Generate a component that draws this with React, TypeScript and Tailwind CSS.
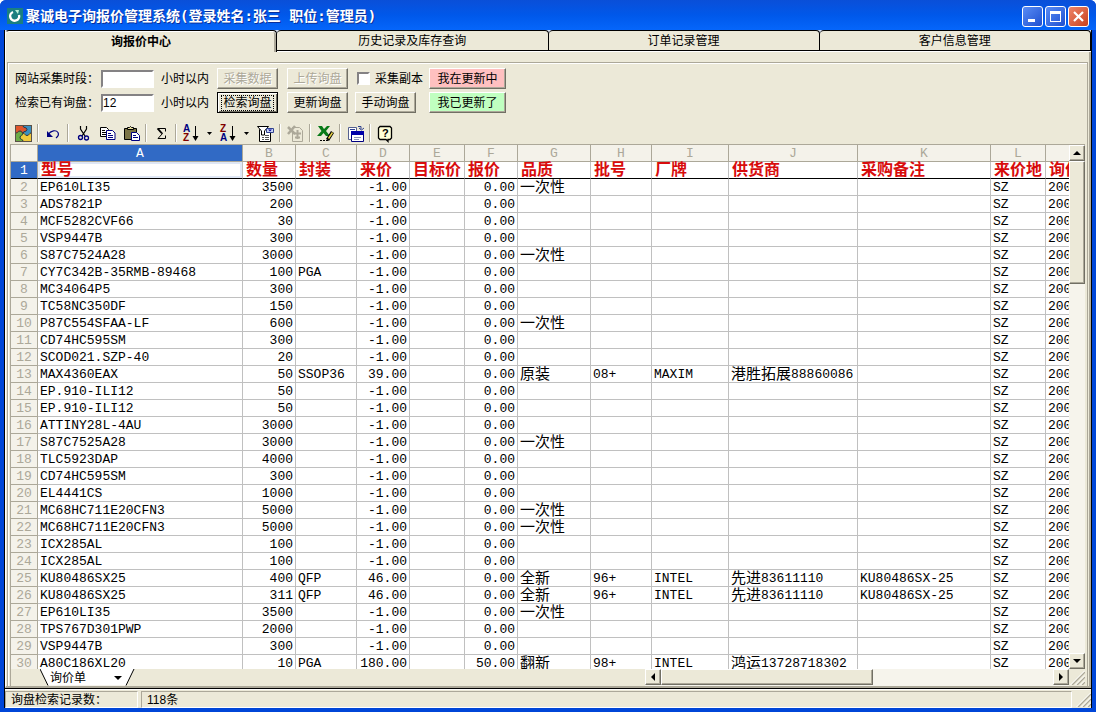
import React from "react";
import clsx from "clsx";

const UI_FONT = "font-['Liberation_Sans','Noto_Sans_CJK_SC',sans-serif]";
const GRID_FONT = "font-['Liberation_Mono','Noto_Sans_CJK_SC',monospace]";

interface Column {
  letter: string;
  title: string;
  width: string;
  right?: boolean;
}

const COLUMNS: Column[] = [
  { letter: "A", title: "型号", width: "w-[205px]" },
  { letter: "B", title: "数量", width: "w-[53px]", right: true },
  { letter: "C", title: "封装", width: "w-[61px]" },
  { letter: "D", title: "来价", width: "w-[53px]", right: true },
  { letter: "E", title: "目标价", width: "w-[55px]", right: true },
  { letter: "F", title: "报价", width: "w-[53px]", right: true },
  { letter: "G", title: "品质", width: "w-[73px]" },
  { letter: "H", title: "批号", width: "w-[61px]" },
  { letter: "I", title: "厂牌", width: "w-[77px]" },
  { letter: "J", title: "供货商", width: "w-[129px]" },
  { letter: "K", title: "采购备注", width: "w-[133px]" },
  { letter: "L", title: "来价地", width: "w-[55px]" },
  { letter: "", title: "询价", width: "w-[100px]" },
];

interface Inquiry {
  model: string;
  qty: string;
  pack?: string;
  cost?: string;
  quote?: string;
  quality?: string;
  batch?: string;
  brand?: string;
  supplier?: string;
  note?: string;
}

const INQUIRIES: Inquiry[] = [
  { model: "EP610LI35", qty: "3500", quality: "一次性" },
  { model: "ADS7821P", qty: "200" },
  { model: "MCF5282CVF66", qty: "30" },
  { model: "VSP9447B", qty: "300" },
  { model: "S87C7524A28", qty: "3000", quality: "一次性" },
  { model: "CY7C342B-35RMB-89468", qty: "100", pack: "PGA" },
  { model: "MC34064P5", qty: "300" },
  { model: "TC58NC350DF", qty: "150" },
  { model: "P87C554SFAA-LF", qty: "600", quality: "一次性" },
  { model: "CD74HC595SM", qty: "300" },
  { model: "SCOD021.SZP-40", qty: "20" },
  { model: "MAX4360EAX", qty: "50", pack: "SSOP36", cost: "39.00", quality: "原装", batch: "08+", brand: "MAXIM", supplier: "港胜拓展88860086" },
  { model: "EP.910-ILI12", qty: "50" },
  { model: "EP.910-ILI12", qty: "50" },
  { model: "ATTINY28L-4AU", qty: "3000" },
  { model: "S87C7525A28", qty: "3000", quality: "一次性" },
  { model: "TLC5923DAP", qty: "4000" },
  { model: "CD74HC595SM", qty: "300" },
  { model: "EL4441CS", qty: "1000" },
  { model: "MC68HC711E20CFN3", qty: "5000", quality: "一次性" },
  { model: "MC68HC711E20CFN3", qty: "5000", quality: "一次性" },
  { model: "ICX285AL", qty: "100" },
  { model: "ICX285AL", qty: "100" },
  { model: "KU80486SX25", qty: "400", pack: "QFP", cost: "46.00", quality: "全新", batch: "96+", brand: "INTEL", supplier: "先进83611110", note: "KU80486SX-25" },
  { model: "KU80486SX25", qty: "311", pack: "QFP", cost: "46.00", quality: "全新", batch: "96+", brand: "INTEL", supplier: "先进83611110", note: "KU80486SX-25" },
  { model: "EP610LI35", qty: "3500", quality: "一次性" },
  { model: "TPS767D301PWP", qty: "2000" },
  { model: "VSP9447B", qty: "300" },
  { model: "A80C186XL20", qty: "10", pack: "PGA", cost: "180.00", quote: "50.00", quality: "翻新", batch: "98+", brand: "INTEL", supplier: "鸿运13728718302" },
];

const toCells = (r: Inquiry) => [
  r.model,
  r.qty,
  r.pack,
  r.cost ?? "-1.00",
  "",
  r.quote ?? "0.00",
  r.quality,
  r.batch,
  r.brand,
  r.supplier,
  r.note,
  "SZ",
  "200",
];

// Chinese runs are set larger than the latin ones
function CellText({ text = "" }: { text?: string }) {
  return (
    <div className="h-4 leading-[18px]">
      {text.split(/([\u4e00-\u9fff]+)/).filter(Boolean).map((part, i) =>
        /[\u4e00-\u9fff]/.test(part) ? (
          <span key={i} className="align-[-1px] text-[15px] leading-none">{part}</span>
        ) : (
          part
        )
      )}
    </div>
  );
}

/* ---------- title bar ---------- */

function TitleBar() {
  const box = "flex size-[21px] items-center justify-center rounded-[3px] border border-white";
  return (
    <header className="flex h-[30px] shrink-0 items-center bg-linear-to-b from-[#0a4fd8] via-[#0058ea] to-[#0566fb] px-[7px] pt-[2px]">
      <svg className="size-4" viewBox="0 0 16 16">
        <rect width="16" height="16" fill="#1a7f80" />
        <path d="M6 4a4.500 4.500 0 1 0 6 3" fill="none" stroke="#fff" strokeWidth="2.4" />
        <path d="M8 2h4l-1 4z" fill="#b9f0d8" />
      </svg>
      <h1 className="ml-[3px] flex-1 whitespace-nowrap font-['DejaVu_Sans_Mono','Noto_Sans_CJK_SC',monospace] text-sm leading-5 font-bold text-white [text-shadow:1px_1px_0_#0a2f9a]">
        聚诚电子询报价管理系统(登录姓名:张三 职位:管理员)
      </h1>
      <div className="flex gap-[2px]">
        <button type="button" aria-label="最小化" className={clsx(box, "bg-linear-to-br from-[#5a8cf5] to-[#1f4fd0]")}>
          <svg className="size-[15px]" viewBox="0 0 15 15"><path d="M3 10h7v3H3z" fill="#fff" /></svg>
        </button>
        <button type="button" aria-label="最大化" className={clsx(box, "bg-linear-to-br from-[#5a8cf5] to-[#1f4fd0]")}>
          <svg className="size-[15px]" viewBox="0 0 15 15"><path d="M2 2h11v11H2zM3 5v7h9V5z" fill="#fff" fillRule="evenodd" /></svg>
        </button>
        <button type="button" aria-label="关闭" className={clsx(box, "bg-linear-to-br from-[#ee8468] to-[#c8401a]")}>
          <svg className="size-[15px]" viewBox="0 0 15 15"><path d="M3 3l9 9M12 3l-9 9" stroke="#fff" strokeWidth="2.2" /></svg>
        </button>
      </div>
    </header>
  );
}

/* ---------- page tabs ---------- */

const TABS = ["询报价中心", "历史记录及库存查询", "订单记录管理", "客户信息管理"];

function PageTabs() {
  return (
    <nav className="flex h-[22px] shrink-0 bg-[#d9e3f4]">
      {TABS.map((tab, i) => (
        <button
          key={tab}
          type="button"
          className={clsx(
            "flex-1 rounded-t-[4px] border-t border-r border-black bg-[#ece9d8] text-center text-xs leading-[18px]",
            i === 0 ? "border-l border-l-white font-bold shadow-[inset_0_1px_0_#fff,inset_-2px_0_0_#aca899]" : "border-b shadow-[0_1px_0_#fff] mb-px"
          )}
        >
          {tab}
        </button>
      ))}
    </nav>
  );
}

/* ---------- query form ---------- */

interface PushButtonProps {
  children: React.ReactNode;
  disabled?: boolean;
  focused?: boolean;
  tone?: "plain" | "pink" | "green";
}

function PushButton({ children, disabled, focused, tone = "plain" }: PushButtonProps) {
  const tones = { plain: "bg-[#ece9d8]", pink: "bg-[#ffc0c0]", green: "bg-[#c0ffc0]" };
  return (
    <button
      type="button"
      disabled={disabled}
      className={clsx(
        "h-[21px] border text-center text-xs leading-4",
        tone === "plain" ? "w-[61px]" : "w-[77px]",
        tones[tone],
        focused
          ? "border-black shadow-[inset_1px_1px_0_#fff,inset_-1px_-1px_0_#716f64]"
          : "border-t-white border-l-white border-r-[#716f64] border-b-[#716f64] shadow-[inset_-1px_-1px_0_#aca899]",
        disabled && "text-[#aca899] [text-shadow:1px_1px_0_#fff]"
      )}
    >
      {focused ? (
        <span className="mx-[3px] block leading-4 outline-1 -outline-offset-1 outline-dotted outline-black">{children}</span>
      ) : (
        children
      )}
    </button>
  );
}

const field =
  "h-[18px] w-[53px] border-2 border-t-[#848284] border-l-[#848284] border-r-white border-b-white bg-white text-xs leading-none outline-none";

function QueryForm() {
  return (
    <form className="grid grid-cols-[86px_53px_63px_70px_68px_74px_78px] items-center gap-y-[3px] pt-[5px] pl-[7px] text-xs whitespace-nowrap">
      <label htmlFor="collect-hours">网站采集时段：</label>
      <input id="collect-hours" className={field} />
      <span className="pl-[7px]">小时以内</span>
      <PushButton disabled>采集数据</PushButton>
      <PushButton disabled>上传询盘</PushButton>
      <label className="flex items-center gap-[5px] pl-[2px]">
        <input
          type="checkbox"
          className="size-[13px] appearance-none border-2 border-t-[#848284] border-l-[#848284] border-r-white border-b-white bg-white"
        />
        采集副本
      </label>
      <PushButton tone="pink">我在更新中</PushButton>

      <label htmlFor="search-hours">检索已有询盘：</label>
      <input id="search-hours" defaultValue="12" className={field} />
      <span className="pl-[7px]">小时以内</span>
      <PushButton focused>检索询盘</PushButton>
      <PushButton>更新询盘</PushButton>
      <PushButton>手动询盘</PushButton>
      <PushButton tone="green">我已更新了</PushButton>
    </form>
  );
}

/* ---------- spreadsheet toolbar ---------- */

function Tool({ label, children }: { label: string; children: React.ReactNode }) {
  return (
    <button type="button" aria-label={label} className="flex h-[22px] w-6 items-center justify-center">
      <svg className="size-[17px] overflow-visible" viewBox="0 0 17 17" fill="none">
        {children}
      </svg>
    </button>
  );
}

function Caret() {
  return (
    <button type="button" aria-label="排序选项" className="flex h-[22px] w-[13px] items-center justify-center">
      <svg className="h-[3px] w-[5px]" viewBox="0 0 5 3"><path d="M0 0h5L2.5 3z" /></svg>
    </button>
  );
}

function Separator() {
  return (
    <span className="flex w-[6px] justify-center">
      <span className="h-[18px] w-[2px] border-l border-[#aca899] bg-white" />
    </span>
  );
}

function SortIcon({ top, bottom, topColor, bottomColor }: { top: string; bottom: string; topColor: string; bottomColor: string }) {
  return (
    <>
      <g fontFamily="Liberation Sans, sans-serif" fontSize="10" fontWeight="bold">
        <text x="0" y="7" fill={topColor}>{top}</text>
        <text x="0" y="16" fill={bottomColor}>{bottom}</text>
      </g>
      <path d="M12.5 1v14" stroke="#000" />
      <path d="M9.500 11h6l-3 5z" fill="#000" />
    </>
  );
}

function Toolbar() {
  return (
    <div className="mt-[9px] flex h-[22px] items-center pl-[3px]">
      <Tool label="关于">
        <path d="M0 0h17v17H0z" fill="#5a5148" />
        <path d="M1 1h7v7H1z" fill="#e0562c" />
        <path d="M8 1h8v7H8z" fill="#3b8fc0" />
        <path d="M1 8h7v8H1z" fill="#6cab45" />
        <path d="M8 8h8v8H8z" fill="#f0c93c" />
        <circle cx="9.500" cy="4.500" r="2.200" fill="#e0562c" />
        <circle cx="5" cy="8.500" r="2.200" fill="#6cab45" />
        <circle cx="12" cy="8" r="2.200" fill="#3b8fc0" />
        <circle cx="8" cy="12.500" r="2.200" fill="#f0c93c" />
        <path d="M8 1c0 2 4 1 4 3.500S8 6 8 8M1 8c2 0 1.500-2 4-2s1 2 3 2M8 8c2 0 1.500 2.500 4 2.500S14 8 16 8M8 8c0 2.500-3 2-3 4.500S8 14 8 16" stroke="#2b3440" />
      </Tool>
      <Separator />
      <Tool label="撤销">
        <path d="M3 9.500c3-4 8-5 10-2 1 2 0 4-2 5.500" stroke="#000080" strokeWidth="1.2" />
        <path d="M2 6v6h6z" fill="#000080" />
      </Tool>
      <Separator />
      <Tool label="剪切">
        <path d="M5.500 1v3l4.500 7M11.500 1v3L7 11" stroke="#000" strokeWidth="1.2" />
        <circle cx="5.500" cy="12.500" r="2" stroke="#000080" strokeWidth="1.3" />
        <circle cx="11.500" cy="13" r="2" stroke="#000080" strokeWidth="1.3" />
      </Tool>
      <Tool label="复制">
        <path d="M1.500 2.500h6l2 2v7h-8z" fill="#fff" stroke="#000" />
        <path d="M3 5.500h3M3 7.500h4M3 9.500h4" stroke="#000" />
        <path d="M7.500 5.500h6l2.500 2.500v6.500H7.500z" fill="#fff" stroke="#000080" />
        <path d="M9 8.500h3M9 10.500h5M9 12.500h5" stroke="#000080" />
      </Tool>
      <Tool label="粘贴">
        <path d="M1.500 3.500h12v11h-12z" fill="#7b7446" stroke="#000" />
        <path d="M4.500 4.500v-2h2l1-1 1 1h2v2z" fill="#e8df9b" stroke="#000" />
        <path d="M8.500 7.500h5l3 3v5h-8z" fill="#fff" stroke="#000080" />
        <path d="M10 10.500h3M10 12.500h5" stroke="#000080" />
      </Tool>
      <Separator />
      <Tool label="求和">
        <path d="M12.500 6.500v-3H5l4.500 5L5 13.500h7.500v-3" stroke="#000" />
        <path d="M4.500 3.500l4.500 5" stroke="#000" strokeWidth="1.8" />
      </Tool>
      <Separator />
      <Tool label="升序排序"><SortIcon top="A" bottom="Z" topColor="#000080" bottomColor="#800000" /></Tool>
      <Caret />
      <Tool label="降序排序"><SortIcon top="Z" bottom="A" topColor="#800000" bottomColor="#000080" /></Tool>
      <Caret />
      <Tool label="自动筛选">
        <path d="M2.500 4.500h11v12h-11z" fill="#fff" stroke="#000" />
        <path d="M.5 1.500h11L7.500 6v4h-3V6z" fill="#fff" stroke="#000" />
        <path d="M9.500 3.500h7v4h-7z" fill="#c8d4f4" stroke="#31438f" />
        <path d="M11 4.500h4l-2 2z" fill="#0000a0" />
        <path d="M8 10.500h4M5 12.500h2M8 12.500h4M5 14.500h2M8 14.500h4" stroke="#555" />
      </Tool>
      <Separator />
      <Tool label="刷新">
        <path d="M5.500 2.500h7l3 3v11h-10z" fill="#ece9d8" stroke="#aca899" />
        <path d="M1 2l7 7M8 1L1 9" stroke="#aca899" strokeWidth="2.500" />
        <path d="M10.500 5v9M7 8.500h7M8 12.500h5" stroke="#aca899" strokeWidth="2" />
      </Tool>
      <Separator />
      <Tool label="导出 Excel">
        <path d="M1 1h4l2 3 3-3h3L9 6l4 5H9L6.500 8 4 11H0l4.500-5z" fill="#087a18" />
        <path d="M15.500 7l-5 8" stroke="#000" strokeWidth="3.500" />
        <path d="M15.500 7.500l-4 6" stroke="#e8d44a" strokeWidth="1.500" />
        <path d="M3 15.500h2M6 15.500h2M9 15.500h2" stroke="#000" />
      </Tool>
      <Separator />
      <Tool label="属性">
        <path d="M1.500 2.500h8v12h-8z" fill="#fff" stroke="#55608f" />
        <path d="M3 4.500h5M11 1.500h3v3M12 3l2.500 2L17 3" stroke="#31438f" />
        <path d="M4.500 6.500h12v10h-12z" fill="#fff" stroke="#000080" />
        <path d="M4 6h13v4H4z" fill="#0000a8" />
        <path d="M7 12.500h7M7 14.500h5" stroke="#8a93b8" />
      </Tool>
      <Separator />
      <Tool label="帮助">
        <path d="M3 1.500h10l1.500 1.500v10L13 14.500h-2v2l-2-2H3L1.500 13V3z" fill="#ffffd8" stroke="#000" strokeWidth="1.300" />
        <text x="5" y="12" fontFamily="Liberation Sans, sans-serif" fontSize="11" fontWeight="bold" fill="#000">?</text>
      </Tool>
    </div>
  );
}

/* ---------- spreadsheet ---------- */

const cell = "h-[17px] border-r border-b border-[#c0c0c0] px-[2px] py-0 whitespace-nowrap";
const heading = "h-[17px] border-r border-b border-[#aca899] p-0 font-normal";
const plainHeading = "bg-[#f4f2ea] text-[#aca899]";

function Sheet() {
  return (
    <div className="min-w-0 flex-1 overflow-hidden bg-white">
      <table className={clsx("w-[1135px] table-fixed border-separate border-spacing-0 text-[13px] leading-4", GRID_FONT)}>
        <colgroup>
          <col className="w-[27px]" />
          {COLUMNS.map((c) => (
            <col key={c.title} className={c.width} />
          ))}
        </colgroup>
        <thead>
          <tr>
            <th className={clsx(heading, plainHeading)} />
            {COLUMNS.map((c, i) => (
              <th key={c.title} className={clsx(heading, i === 0 ? "bg-[#316ac5] text-white" : plainHeading)}>
                <CellText text={c.letter} />
              </th>
            ))}
          </tr>
          <tr>
            <th className="h-[17px] border-r border-b border-r-[#aca899] border-b-black bg-[#316ac5] p-0 font-normal text-white">
              <CellText text="1" />
            </th>
            {COLUMNS.map((c, i) => (
              <th
                key={c.title}
                className={clsx(
                  "h-[17px] border-r border-b border-r-[#c0c0c0] border-b-black py-0 pl-[3px] text-left text-base font-bold whitespace-nowrap text-[#d80c0c]",
                  i === 0 && "shadow-[inset_0_0_0_2px_#dfe7f5]"
                )}
              >
                <div className="h-4 leading-[18px]">{c.title}</div>
              </th>
            ))}
          </tr>
        </thead>
        <tbody>
          {INQUIRIES.map((r, n) => (
            <tr key={n}>
              <th className={clsx(heading, plainHeading)}>
                <CellText text={String(n + 2)} />
              </th>
              {toCells(r).map((text, i) => (
                <td key={i} className={clsx(cell, COLUMNS[i].right && "text-right")}>
                  <CellText text={text} />
                </td>
              ))}
            </tr>
          ))}
        </tbody>
      </table>
    </div>
  );
}

const raised = "border border-t-white border-l-white border-r-[#716f64] border-b-[#716f64] bg-[#ece9d8] shadow-[inset_-1px_-1px_0_#aca899]";

function ArrowButton({ label, d }: { label: string; d: string }) {
  return (
    <button type="button" aria-label={label} className={clsx("flex size-4 shrink-0 items-center justify-center", raised)}>
      <svg className="size-[8px]" viewBox="0 0 8 8"><path d={d} /></svg>
    </button>
  );
}

function VerticalScroll() {
  return (
    <div className="flex w-4 shrink-0 flex-col bg-[#f6f4ec]">
      <ArrowButton label="向上" d="M0 6h8L4 2z" />
      <div className="min-h-0 flex-1">
        <div className={clsx("h-[25%]", raised)} />
      </div>
      <ArrowButton label="向下" d="M0 2h8L4 6z" />
    </div>
  );
}

function Grip() {
  return (
    <svg className="size-4 shrink-0 bg-[#ece9d8]" viewBox="0 0 16 16">
      <path d="M3 16L16 3M8 16l8-8M13 16l3-3" stroke="#aca899" strokeWidth="1.500" />
      <path d="M1.500 16L16 1.500M6.500 16L16 6.500M11.500 16l4.500-4.500" stroke="#fff" />
    </svg>
  );
}

function SheetFooter() {
  return (
    <div className="flex h-[17px] shrink-0">
      <div className="w-[59%] pl-[29px]">
        <button type="button" className="relative flex h-[17px] w-[95px] items-center justify-between pr-[13px] pl-[10px] text-xs leading-4">
          <svg className="absolute inset-0 h-[17px] w-[95px]" viewBox="0 0 95 17">
            <path d="M0 0h94l-8 16.500H8z" fill="#fff" />
            <path d="M0 0l8 16.500M94 0l-8 16.500" stroke="#000" fill="none" />
          </svg>
          <span className="relative">询价单</span>
          <svg className="relative h-[4px] w-[8px]" viewBox="0 0 8 4"><path d="M0 0h8L4 4z" /></svg>
        </button>
      </div>
      <div className="flex min-w-0 flex-1 bg-[#f6f4ec]">
        <ArrowButton label="向左" d="M6 0v8L2 4z" />
        <div className="min-w-0 flex-1">
          <div className={clsx("h-4 w-[54%]", raised)} />
        </div>
        <ArrowButton label="向右" d="M2 0v8l4-4z" />
      </div>
      <Grip />
    </div>
  );
}

function StatusBar() {
  const pane = "border border-t-[#aca899] border-l-[#aca899] border-r-white border-b-white px-[5px] leading-4";
  return (
    <footer className="flex h-[19px] shrink-0 gap-[3px] border-t border-white pt-px text-xs">
      <div className={clsx(pane, "w-[133px]")}>询盘检索记录数：</div>
      <div className={clsx(pane, "flex-1")}>118条</div>
      <Grip />
    </footer>
  );
}

export default function App() {
  return (
    <div className={clsx("flex h-screen w-full flex-col overflow-hidden rounded-t-md bg-[#0046d8] text-black", UI_FONT)}>
      <TitleBar />
      <div className="mx-1 mb-1 flex min-h-0 flex-1 flex-col border-x border-black bg-[#ece9d8]">
        <PageTabs />
        <main className="flex min-h-0 flex-1 flex-col border-r-2 border-b-2 border-l border-r-[#aca899] border-b-[#aca899] border-l-white px-px pt-[10px]">
          <section className="flex min-h-0 flex-1 flex-col border border-b-0 border-[#aca899] shadow-[inset_1px_1px_0_#fff]">
            <QueryForm />
            <Toolbar />
            <div className="mr-[2px] ml-[2px] flex min-h-0 flex-1 flex-col border-t border-l border-[#aca899]">
              <div className="flex min-h-0 flex-1">
                <Sheet />
                <VerticalScroll />
              </div>
              <SheetFooter />
            </div>
          </section>
        </main>
        <div className="h-px shrink-0 bg-black" />
        <StatusBar />
      </div>
    </div>
  );
}
